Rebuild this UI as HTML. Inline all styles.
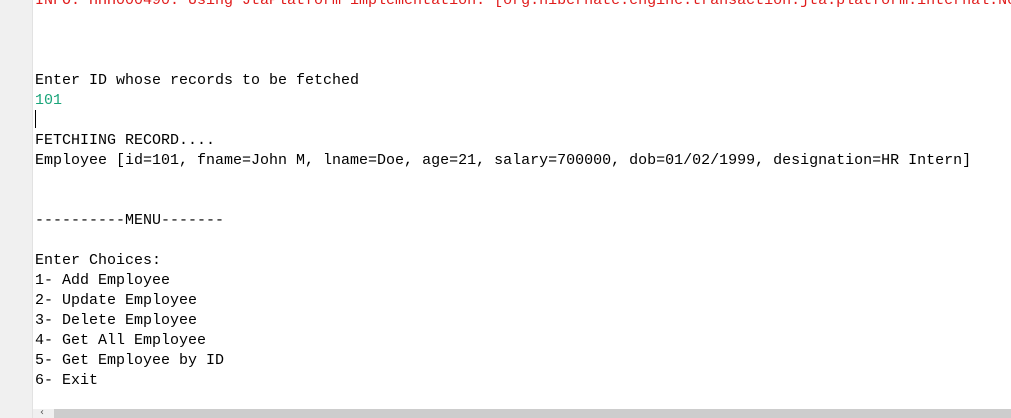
<!DOCTYPE html>
<html><head><style>
html,body{margin:0;width:1011px;height:418px;overflow:hidden;}
body{background:#fff;position:relative;font-family:"Liberation Mono",monospace;font-size:15px;}
#wrap{position:absolute;left:0;top:0;width:1011px;height:418px;overflow:hidden;}
#gut{position:absolute;left:0;top:0;width:32px;height:418px;background:#f0f0f0;border-right:1px solid #e2e2e2;}
.l{position:absolute;left:35px;height:20px;line-height:20px;white-space:pre;color:#000;}
.r{color:#e01b1b;width:976px;overflow:hidden}
.g{color:#1aa57a}
#cur{position:absolute;left:35px;top:110px;width:1px;height:18px;background:#000}
#sb{position:absolute;left:33px;top:409px;width:978px;height:9px;background:#f0f0f0}
#th{position:absolute;left:54px;top:409px;width:957px;height:9px;background:#cdcdcd}
#ar{position:absolute;left:40px;top:408px;font-size:10px;color:#555;font-family:"DejaVu Sans",sans-serif;line-height:10px}
</style></head><body><div id="wrap">
<div id="gut"></div>
<div class="l r" style="top:-9px">INFO: HHH000490: Using JtaPlatform implementation: [org.hibernate.engine.transaction.jta.platform.internal.NoJtaPlatform]</div>
<div class="l" style="top:71px">Enter ID whose records to be fetched</div>
<div class="l g" style="top:91px">101</div>
<div id="cur"></div>
<div class="l" style="top:131px">FETCHIING RECORD....</div>
<div class="l" style="top:151px">Employee [id=101, fname=John M, lname=Doe, age=21, salary=700000, dob=01/02/1999, designation=HR Intern]</div>
<div class="l" style="top:211px">----------MENU-------</div>
<div class="l" style="top:251px">Enter Choices:</div>
<div class="l" style="top:271px">1- Add Employee</div>
<div class="l" style="top:291px">2- Update Employee</div>
<div class="l" style="top:311px">3- Delete Employee</div>
<div class="l" style="top:331px">4- Get All Employee</div>
<div class="l" style="top:351px">5- Get Employee by ID</div>
<div class="l" style="top:371px">6- Exit</div>
<div id="sb"></div><div id="th"></div><div id="ar">‹</div>
</div></body></html>
